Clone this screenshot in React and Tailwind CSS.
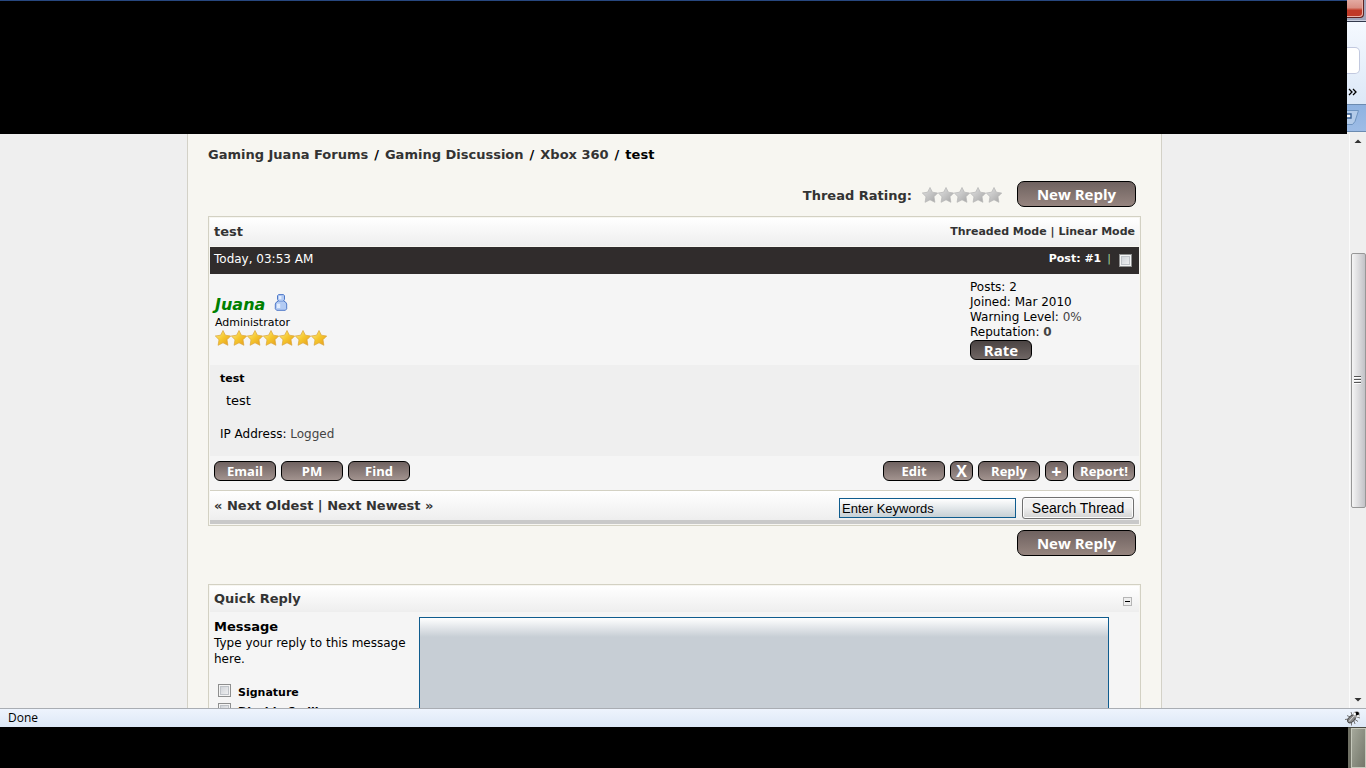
import { useState } from "react";

const STAR = "M8 .5 10.4 5.200 15.700 6 12 9.700 12.900 15.300 8 12.800 3.100 15.300 4 9.700 .3 6 5.600 5.200Z";

function Stars({ count, gold }) {
  const id = gold ? "star-gold" : "star-grey";
  return (
    <svg width={count * 16} height="16" viewBox={`0 0 ${count * 16} 16`} aria-hidden="true">
      <defs>
        <linearGradient id={id} x1="0" y1="0" x2="1" y2="1">
          <stop offset="0" stopColor={gold ? "#fdf08a" : "#e2e2e2"} />
          <stop offset=".5" stopColor={gold ? "#f5c62c" : "#c4c4c4"} />
          <stop offset="1" stopColor={gold ? "#e59a1c" : "#a2a2a2"} />
        </linearGradient>
      </defs>
      {Array.from({ length: count }, (_, i) => (
        <path
          key={i}
          d={STAR}
          transform={`translate(${i * 16} 0)`}
          fill={`url(#${id})`}
          stroke={gold ? "#dba53a" : "#b4b4b4"}
          strokeWidth=".7"
          strokeLinejoin="round"
        />
      ))}
    </svg>
  );
}

function UserIcon() {
  return (
    <svg width="14" height="17" viewBox="0 0 14 17" aria-hidden="true">
      <path
        d="M4.500.6h5l1 1.200v3.600l-1 1.600 2 1 1.200 2v4.800l-1.300 1.500H2.600l-1.300-1.500V10l1.200-2 2-1-1-1.600V1.800Z"
        fill="#b3cbf3"
        stroke="#4f79c8"
      />
      <path d="M5 2h2.400v3.200H5ZM3 9.800h3.200v4.200H3Z" fill="#e2ecfd" />
      <path d="M4.600 7.300h4.800" stroke="#7f9fdb" />
    </svg>
  );
}

function PillButton({ children, narrow }) {
  return (
    <button
      type="button"
      className={`flex h-5 items-center justify-center rounded-[6px] border border-black bg-linear-to-b from-[#6f6260] to-[#a2938f] font-['Open_Sans',sans-serif] text-[13px] leading-4 font-bold text-white ${narrow ? "w-[23px]" : "w-[62px]"}`}
    >
      {children}
    </button>
  );
}

function NewReplyButton() {
  return (
    <button
      type="button"
      className="flex h-[26px] w-[119px] items-center justify-center rounded-[7px] border border-black bg-linear-to-b from-[#6f6260] to-[#96857f] font-['Open_Sans',sans-serif] text-[15px] leading-5 font-bold text-white"
    >
      New Reply
    </button>
  );
}

function CheckBox({ id, label, checked, onChange }) {
  return (
    <input
      id={id}
      type="checkbox"
      aria-label={label}
      checked={checked}
      onChange={onChange}
      className="size-[13px] shrink-0 appearance-none border border-[#8e8f8f] bg-linear-to-br from-[#c9cdd3] to-[#f6f6f6] shadow-[inset_0_0_0_1px_#f4f4f4,inset_0_0_0_2px_#bfc3c8] checked:bg-[#3b5a82]"
    />
  );
}

// Right edge of the browser window, next to the header
function WindowEdge() {
  return (
    <div className="flex w-[19px] shrink-0 flex-col bg-[#f0f0f0]">
      <div className="h-[21px] border-b border-[#c9cddc] bg-[#9ea5bb] pr-[2px] pb-[2px]">
        <div className="h-[18px] rounded-br-[4px] border-r border-b border-[#5e2322] bg-linear-to-b from-[#e3aaa2] via-[#d98f84] via-45% to-[#c03a28] to-60% shadow-[inset_-1px_-1px_0_#eab0a6]" />
      </div>
      <div className="flex h-[83px] flex-col border-t border-[#33394c] bg-linear-to-b from-[#f5f9ff] to-[#dce8f7]">
        <div className="mt-[25px] h-[27px] w-[13px] rounded-r-[5px] border border-l-0 border-[#c2c9df] bg-white" />
        <svg className="mt-[14px]" width="19" height="9" viewBox="0 0 19 9" aria-hidden="true">
          <path d="m2 1 3 3-3 3M6 1l3 3-3 3" fill="none" stroke="#000" strokeWidth="1.300" />
        </svg>
      </div>
      <div className="h-7 border-y border-[#6c8bb0] bg-linear-to-b from-[#8fb2e0] to-[#9dbce6]">
        <svg width="19" height="26" viewBox="0 0 19 26" aria-hidden="true">
          <path d="M0 5.500h11.500L8 16.500 5.500 19.500H0" fill="#b3cbe9" stroke="#6f94c0" />
          <path d="M0 9h4v4H0" fill="#fff" stroke="#375f93" strokeWidth="1.400" />
        </svg>
      </div>
    </div>
  );
}

function ScrollBar() {
  return (
    <div className="flex w-[17px] shrink-0 flex-col items-center border-l border-[#fbfbfb] bg-[#efefef]">
      <svg width="16" height="14" viewBox="0 0 16 14" aria-hidden="true">
        <path d="M4.500 9 8 5.500 11.500 9Z" fill="#333" />
      </svg>
      <div className="h-[105px]" />
      <div className="flex h-[255px] w-[15px] items-center justify-center rounded-[2px] border border-[#979797] bg-linear-to-r from-[#f5f5f5] via-[#dcdcde] to-[#c2c2c7]">
        <svg width="8" height="11" viewBox="0 0 8 11" aria-hidden="true">
          <path d="M0 1.500h7M0 4.500h7M0 7.500h7" stroke="#555" />
          <path d="M0 2.500h7M0 5.500h7M0 8.500h7" stroke="#fff" />
        </svg>
      </div>
      <div className="flex-1" />
      <svg width="16" height="16" viewBox="0 0 16 16" aria-hidden="true">
        <path d="M4.500 6 8 9.500 11.500 6Z" fill="#333" />
      </svg>
    </div>
  );
}

function BugIcon() {
  return (
    <svg width="18" height="16" viewBox="0 0 18 16" aria-hidden="true">
      <path
        d="M1 9.500 5 9M3 5.500l3 1.500M7 2l1 3M11 14l-1-3M14 11.500l-3-2M16 8l-3-1M4 13l2-2M7.500 15.500v-3"
        stroke="#777"
        strokeWidth="1"
      />
      <ellipse cx="7.500" cy="9" rx="4.500" ry="2.800" transform="rotate(-45 7.500 9)" fill="#8a8a8a" stroke="#444" />
      <path d="m5 11.500 5-5.500" stroke="#ddd" />
      <circle cx="12.500" cy="4.500" r="3.300" fill="#a8a8a8" />
      <circle cx="13" cy="3.600" r="1.900" fill="#000" />
      <circle cx="10.800" cy="4" r="1.200" fill="#fff" />
      <circle cx="14" cy="6" r="1" fill="#fff" />
    </svg>
  );
}

function Post({ selected, onSelect }) {
  return (
    <article>
      <div className="flex h-[27px] items-start justify-between bg-[#302c2c] px-1 pt-1 text-white">
        <span className="text-xs leading-4">Today, 03:53 AM</span>
        <div className="flex items-start pr-[3px]">
          <a href="#post" className="leading-4 font-bold">Post: #1</a>
          <span className="mr-2 ml-[6px] leading-4 text-[#9fd89f]">|</span>
          <div className="flex pt-[3px]">
            <CheckBox label="Select post" checked={selected} onChange={onSelect} />
          </div>
        </div>
      </div>
      <div className="flex h-[91px] bg-[#f5f5f5] pl-[5px]">
        <div className="flex-1 pt-5">
          <div className="flex items-start gap-[9px]">
            <a href="#juana" className="text-base leading-[22px] font-bold text-[#008000] italic">Juana</a>
            <UserIcon />
          </div>
          <div className="leading-[14px]">Administrator</div>
          <Stars count={7} gold />
        </div>
        <div className="w-[169px] pt-[6px] text-xs leading-[15px]">
          <div>Posts: 2</div>
          <div>Joined: Mar 2010</div>
          <div>Warning Level: <a href="#warn" className="text-[#444]">0%</a></div>
          <div>Reputation: <a href="#rep" className="font-bold text-[#444]">0</a></div>
          <button
            type="button"
            className="flex h-5 w-[62px] items-center justify-center rounded-[6px] border border-black bg-linear-to-b from-[#4b4443] to-[#6f6664] font-['Open_Sans',sans-serif] text-[15px] leading-5 font-bold text-white"
          >
            Rate
          </button>
        </div>
      </div>
      <div className="h-[91px] bg-[#efefef] px-[10px] pt-[6px]">
        <div className="leading-4 font-bold">test</div>
        <p className="pt-[6px] pl-[6px] text-[13px] leading-4">test</p>
        <div className="pt-[17px] text-xs leading-4">IP Address: <a href="#ip" className="text-[#444]">Logged</a></div>
      </div>
      <div className="flex h-[34px] justify-between bg-[#f5f5f5] px-1 pt-[5px]">
        <div className="flex gap-[5px]">
          <PillButton>Email</PillButton>
          <PillButton>PM</PillButton>
          <PillButton>Find</PillButton>
        </div>
        <div className="flex gap-[5px]">
          <PillButton>Edit</PillButton>
          <PillButton narrow><span className="text-base">X</span></PillButton>
          <PillButton>Reply</PillButton>
          <PillButton narrow><span className="text-lg">+</span></PillButton>
          <PillButton>Report!</PillButton>
        </div>
      </div>
    </article>
  );
}

export default function App() {
  const [selected, setSelected] = useState(false);
  const [signature, setSignature] = useState(false);
  const [smilies, setSmilies] = useState(false);
  const [keywords, setKeywords] = useState("Enter Keywords");
  const [message, setMessage] = useState("");
  const [open, setOpen] = useState(true);

  return (
    <div className="flex h-screen flex-col bg-black font-['DejaVu_Sans',Verdana,sans-serif] text-[11px] text-black">
      <header className="flex h-[134px] shrink-0">
        <div className="flex-1 border-t border-[#27477f] bg-black" />
        <WindowEdge />
      </header>

      <div className="flex min-h-0 flex-1">
        <main className="flex-1 overflow-hidden bg-[#efefef]">
          <div className="mx-auto min-h-full max-w-[975px] border-x border-[#d3d1c7] bg-[#f7f6f1] px-5">
            <nav className="flex gap-[6px] pt-[13px] text-[13px] leading-4 font-bold text-[#333]">
              <a href="#forums">Gaming Juana Forums</a>
              <span className="text-black">/</span>
              <a href="#discussion">Gaming Discussion</a>
              <span className="text-black">/</span>
              <a href="#xbox">Xbox 360</a>
              <span className="text-black">/</span>
              <span className="text-black">test</span>
            </nav>

            <div className="flex items-center justify-end pt-[18px] pr-[5px] pb-[9px]">
              <span className="mr-[10px] pt-1 text-[13px] leading-4 font-bold text-[#333]">Thread Rating:</span>
              <div className="mr-[15px] pt-0.5">
                <Stars count={5} />
              </div>
              <NewReplyButton />
            </div>

            <section className="border border-[#d3d1c3] bg-[#f7f6f1] p-px">
              <div className="mb-px flex h-7 items-center justify-between bg-linear-to-b from-white to-[#eeeeee] px-1 font-bold text-[#333]">
                <h1 className="text-[13px] leading-4">test</h1>
                <div className="leading-4">
                  <a href="#threaded">Threaded Mode</a> | <a href="#linear">Linear Mode</a>
                </div>
              </div>
              <Post selected={selected} onSelect={() => setSelected(!selected)} />
              <div className="flex h-[34px] items-start justify-between border-t border-b-4 border-t-[#d3d1c3] border-b-[#c9c9c9] bg-linear-to-b from-white to-[#eeeeee] pr-[5px] pl-1">
                <div className="pt-[7px] text-[13px] leading-4 font-bold text-[#333]">
                  « <a href="#older">Next Oldest</a> | <a href="#newer">Next Newest</a> »
                </div>
                <form className="flex gap-[6px] pt-[6px] font-['Liberation_Sans',sans-serif] text-[13px]" onSubmit={(e) => e.preventDefault()}>
                  <input
                    type="text"
                    aria-label="Enter Keywords"
                    value={keywords}
                    onChange={(e) => setKeywords(e.target.value)}
                    className="mt-px h-5 w-[177px] border border-[#0f5c8e] bg-linear-to-b from-white to-[#c7d0d5] px-0.5"
                  />
                  <button type="submit" className="h-[22px] w-28 rounded-[3px] border border-[#707070] bg-linear-to-b from-[#f2f2f2] from-45% to-[#d3d3d3] text-sm leading-5 whitespace-nowrap shadow-[inset_0_0_0_1px_#fcfcfc]">
                    Search Thread
                  </button>
                </form>
              </div>
            </section>

            <div className="flex justify-end pt-1 pr-[5px] pb-7">
              <NewReplyButton />
            </div>

            <section className="border border-b-0 border-[#d3d1c3] bg-[#f7f6f1] p-px">
              <div className="flex h-[26px] items-center justify-between bg-linear-to-b from-white to-[#eeeeee] pr-[7px] pl-1">
                <h2 className="text-[13px] leading-4 font-bold text-[#333]">Quick Reply</h2>
                <button
                  type="button"
                  aria-label="Toggle quick reply"
                  onClick={() => setOpen(!open)}
                  className="mt-1 flex size-[9px] items-center justify-center border border-[#b5b5b5] bg-[#eeeeee]"
                >
                  <span className="h-px w-[5px] bg-black" />
                </button>
              </div>
              {open && (
                <div className="flex bg-[#f5f5f5] px-1 pt-[5px]">
                  <div className="w-[205px] shrink-0 pt-0.5 pr-2">
                    <label htmlFor="message" className="block text-[13px] leading-4 font-bold">Message</label>
                    <p className="text-xs leading-4">Type your reply to this message here.</p>
                    <div className="flex items-center gap-[7px] pt-[14px] pl-1">
                      <CheckBox id="signature" checked={signature} onChange={() => setSignature(!signature)} />
                      <label htmlFor="signature" className="pt-1 leading-[15px] font-bold">Signature</label>
                    </div>
                    <div className="flex items-center gap-[7px] pl-1">
                      <CheckBox id="smilies" checked={smilies} onChange={() => setSmilies(!smilies)} />
                      <label htmlFor="smilies" className="pt-1 leading-[15px] font-bold">Disable Smilies</label>
                    </div>
                  </div>
                  <textarea
                    id="message"
                    value={message}
                    onChange={(e) => setMessage(e.target.value)}
                    className="h-40 w-[690px] resize-none border border-[#0f5c8e] bg-[#c7ced5] bg-linear-to-b from-white to-[#c7ced5] to-[19px] p-1 text-[13px]"
                  />
                </div>
              )}
            </section>
          </div>
        </main>
        <ScrollBar />
      </div>

      <footer className="shrink-0">
        <div className="flex h-[19px] items-center justify-between border-t border-[#a9adb3] bg-linear-to-b from-[#eef4fd] to-[#dde8f6] pr-1 pl-2 font-['Open_Sans',sans-serif] text-xs leading-4">
          <span>Done</span>
          <BugIcon />
        </div>
        <div className="flex h-[41px] justify-end">
          <div className="flex w-[18px] border-t border-[#4a4b42] bg-[#6f7064] pl-[3px]">
            <div className="flex-1 border border-[#c5c8bb] bg-linear-to-br from-[#a5a89b] to-[#74776a]" />
          </div>
        </div>
      </footer>
    </div>
  );
}
